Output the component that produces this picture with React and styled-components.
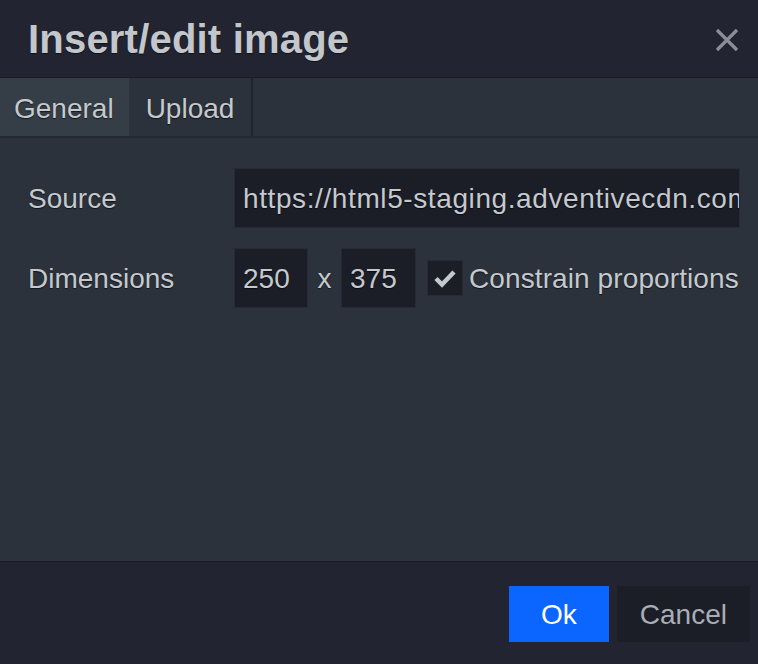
import React from "react";
import styled, { createGlobalStyle } from "styled-components";

const GlobalStyle = createGlobalStyle`
  html, body {
    margin: 0;
    padding: 0;
    background: #2b323b;
  }
  * {
    box-sizing: border-box;
  }
`;

const Dialog = styled.div`
  width: 758px;
  height: 664px;
  display: flex;
  flex-direction: column;
  font-family: "Liberation Sans", Arial, sans-serif;
  color: #c5c9ce;
  background: #2b323b;
`;

const Header = styled.div`
  height: 78px;
  flex: none;
  display: flex;
  align-items: center;
  justify-content: space-between;
  padding: 2px 14px 0 28px;
  background: #222431;
  border-bottom: 1px solid #1a1c25;
`;

const Title = styled.h1`
  margin: 0;
  font-size: 40px;
  font-weight: bold;
  letter-spacing: 0.2px;
  color: #c3c6cb;
  text-shadow: 0 1px 1px rgba(0, 0, 0, 0.5);
`;

const Close = styled.button`
  width: 34px;
  height: 34px;
  padding: 0;
  border: 0;
  background: transparent;
  display: flex;
  align-items: center;
  justify-content: center;
  cursor: pointer;
`;

const TabBar = styled.div`
  height: 60px;
  flex: none;
  display: flex;
  background: #2b323b;
  border-bottom: 2px solid #232830;
`;

const Tab = styled.div`
  display: flex;
  align-items: center;
  padding: 3px ${p => (p.$active ? "15px" : "17px")} 0 ${p => (p.$active ? "14px" : "17px")};
  font-size: 28px;
  background: ${p => (p.$active ? "#353d46" : "transparent")};
  border-right: ${p => (p.$active ? "none" : "2px solid #20252c")};
  text-shadow: 0 1px 1px rgba(0, 0, 0, 0.6);
`;

const Body = styled.div`
  flex: 1;
  padding: 30px 18px 0 28px;
  display: flex;
  flex-direction: column;
  gap: 20px;
`;

const Row = styled.div`
  display: grid;
  grid-template-columns: 206px 1fr;
  align-items: center;
`;

const Label = styled.label`
  font-size: 28px;
  padding-top: 2px;
  text-shadow: 0 1px 1px rgba(0, 0, 0, 0.6);
`;

const Input = styled.div`
  height: 60px;
  width: ${p => p.$width || "auto"};
  display: flex;
  align-items: center;
  padding: 2px 8px 0;
  font-size: 28px;
  letter-spacing: ${p => (p.$wide ? "0.6px" : "0")};
  background: #1b1d27;
  border: 1px solid #262a34;
  white-space: nowrap;
  overflow: hidden;
  text-shadow: 0 1px 1px rgba(0, 0, 0, 0.6);
`;

const Inline = styled.div`
  display: flex;
  align-items: center;
`;

const Times = styled.span`
  font-size: 28px;
  width: 33px;
  padding-top: 2px;
  text-align: center;
  text-shadow: 0 1px 1px rgba(0, 0, 0, 0.6);
`;

const Checkbox = styled.span`
  width: 36px;
  height: 36px;
  margin: 0 6px 0 11px;
  display: flex;
  align-items: center;
  justify-content: center;
  background: #1b1d27;
  border: 1px solid #262a34;
`;

const CheckLabel = styled.span`
  font-size: 28px;
  padding-top: 2px;
  letter-spacing: 0.1px;
  white-space: nowrap;
  text-shadow: 0 1px 1px rgba(0, 0, 0, 0.6);
`;

const Footer = styled.div`
  height: 103px;
  flex: none;
  display: flex;
  justify-content: flex-end;
  align-items: center;
  gap: 8px;
  padding: 2px 8px 0 0;
  background: #222431;
  border-top: 1px solid #1a1c25;
`;

const Button = styled.button`
  height: 56px;
  padding: 2px ${p => (p.$primary ? "30px" : "23px")} 0;
  min-width: ${p => (p.$primary ? "100px" : "auto")};
  border: 0;
  font-family: inherit;
  font-size: 28px;
  color: ${p => (p.$primary ? "#ffffff" : "#a9adb5")};
  background: ${p => (p.$primary ? "#0b66ff" : "#1b1d27")};
  cursor: pointer;
`;

const CloseIcon = () => (
  <svg width="26" height="26" viewBox="0 0 26 26">
    <path d="M3 3 L23 23 M23 3 L3 23" stroke="#8a8e96" strokeWidth="3.2" />
  </svg>
);

const CheckIcon = () => (
  <svg width="24" height="24" viewBox="0 0 24 24">
    <path d="M3 12.5 L9 18.5 L21 6" stroke="#c5c9ce" strokeWidth="4.5" fill="none" />
  </svg>
);

const App = () => (
  <>
    <GlobalStyle />
    <Dialog>
      <Header>
        <Title>Insert/edit image</Title>
        <Close aria-label="Close">
          <CloseIcon />
        </Close>
      </Header>
      <TabBar>
        <Tab $active>General</Tab>
        <Tab>Upload</Tab>
      </TabBar>
      <Body>
        <Row>
          <Label>Source</Label>
          <Input $wide>https://html5-staging.adventivecdn.com/</Input>
        </Row>
        <Row>
          <Label>Dimensions</Label>
          <Inline>
            <Input $width="74px">250</Input>
            <Times>x</Times>
            <Input $width="75px">375</Input>
            <Checkbox>
              <CheckIcon />
            </Checkbox>
            <CheckLabel>Constrain proportions</CheckLabel>
          </Inline>
        </Row>
      </Body>
      <Footer>
        <Button $primary>Ok</Button>
        <Button>Cancel</Button>
      </Footer>
    </Dialog>
  </>
);

export default App;
